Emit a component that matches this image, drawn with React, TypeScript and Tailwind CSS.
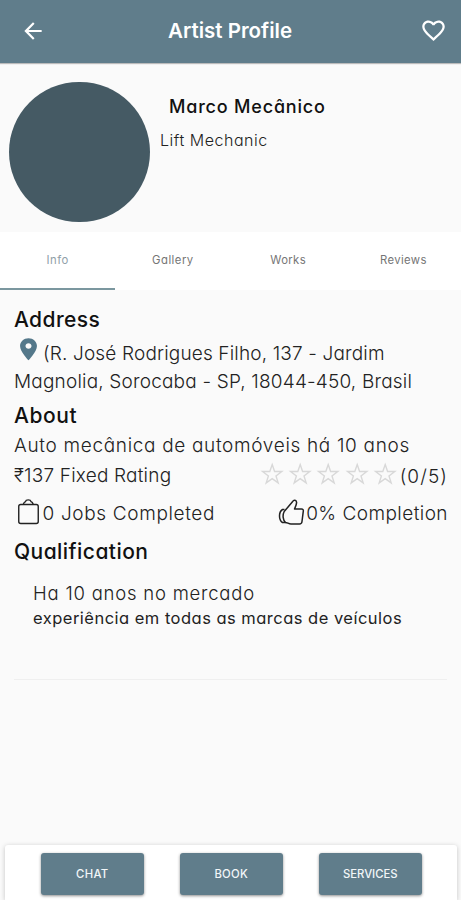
function Star() {
  return (
    <svg className="-mt-[5px] h-7 w-[28.4px]" viewBox="0 0 28 28" fill="none" stroke="#d8d8d8" strokeWidth="1.4">
      <path d="M14 4.600l2.400 6.900h7.200l-5.800 4.400 2.200 7L14 18.700l-6 4.200 2.200-7-5.800-4.400h7.200z" />
    </svg>
  );
}

const tabs = [
  { name: 'Info', style: 'text-[#90a0a8] tracking-[0.42px]' },
  { name: 'Gallery', style: 'text-[#757575] tracking-[0.5px]' },
  { name: 'Works', style: 'text-[#757575] tracking-[0.38px]' },
  { name: 'Reviews', style: 'text-[#757575] tracking-[0.38px]' },
];

const actions = [
  { name: 'CHAT', style: 'tracking-[0.3px]' },
  { name: 'BOOK', style: 'tracking-[0.3px]' },
  { name: 'SERVICES', style: 'tracking-[-0.05px]' },
];

export default function App() {
  return (
    <div className="flex h-[900px] w-[461px] flex-col overflow-hidden bg-[#fafafa] font-['Inter','Noto_Sans',sans-serif] whitespace-nowrap text-[#111] [font-feature-settings:'cv11']">
      <header className="flex h-[63px] shrink-0 items-center justify-between bg-[#607d8b] pr-[14px] pl-[20px] text-white shadow-[0_1px_1px_rgba(0,0,0,0.25)]">
        <svg className="-mt-px h-[26px] w-[26px]" viewBox="0 0 24 24" fill="currentColor">
          <path d="M20 11H7.83l5.59-5.59L12 4l-8 8 8 8 1.41-1.41L7.83 13H20v-2z" />
        </svg>
        <h1 className="mr-[6px] text-[20.5px] font-semibold">Artist Profile</h1>
        <svg className="-mt-[2px] h-[27px] w-[27px]" viewBox="0 0 24 24" fill="currentColor">
          <path d="M16.5 3c-1.74 0-3.41.81-4.5 2.09C10.91 3.81 9.24 3 7.5 3 4.42 3 2 5.42 2 8.5c0 3.78 3.4 6.86 8.55 11.54L12 21.35l1.45-1.32C18.6 15.36 22 12.28 22 8.5 22 5.42 19.58 3 16.5 3zm-4.4 15.55l-.1.1-.1-.1C7.14 14.24 4 11.39 4 8.5 4 6.5 5.5 5 7.5 5c1.54 0 3.04.99 3.57 2.36h1.87C13.46 5.99 14.96 5 16.5 5c2 0 3.5 1.5 3.5 3.5 0 2.89-3.14 5.74-7.9 10.05z" />
        </svg>
      </header>

      <section className="flex h-[169px] shrink-0 items-start pt-[19px] pl-[9.4px]">
        <div className="h-[140px] w-[141px] rounded-full bg-[#455a64]" />
        <div className="pt-[9px] pl-[9.600px]">
          <h2 className="pl-[9px] text-[18px] leading-[31px] font-medium tracking-[0.81px]">Marco Mecânico</h2>
          <p className="pt-px text-[16px] leading-[35px] font-light tracking-[0.52px] text-[#222]">Lift Mechanic</p>
        </div>
      </section>

      <nav className="grid h-[58px] shrink-0 grid-cols-4 bg-white">
        {tabs.map((t, i) => (
          <div key={t.name} className={i === 0 ? 'border-b-2 border-[#7b979f]' : 'border-b-2 border-transparent'}>
            <div className={`text-center text-[11.3px] leading-[56px] ${t.style}`}>{t.name}</div>
          </div>
        ))}
      </nav>

      <main className="flex-1 pt-[14px] pr-[14px] pl-[14px] text-[19px] font-light text-[#222]">
        <h3 className="h-8 text-[21px] leading-8 font-medium tracking-[0.4px] text-[#111]">Address</h3>
        <div className="flex h-8 items-center">
          <svg className="-mt-[5px] h-[26.5px] w-[29px]" viewBox="0 0 24 24" preserveAspectRatio="none" fill="#54788a">
            <path d="M12 2C8.13 2 5 5.13 5 9c0 5.25 7 13 7 13s7-7.75 7-13c0-3.87-3.13-7-7-7zm0 9.5c-1.38 0-2.5-1.12-2.5-2.5s1.12-2.5 2.5-2.5 2.5 1.12 2.5 2.5-1.12 2.5-2.5 2.5z" />
          </svg>
          <span className="mt-[4px] leading-8 tracking-[0.16px]">(R. José Rodrigues Filho, 137 - Jardim</span>
        </div>
        <p className="h-[27px] leading-[27px] tracking-[0.19px]">Magnolia, Sorocaba - SP, 18044-450, Brasil</p>
        <h3 className="mt-[6px] h-[30px] text-[21px] leading-[30px] font-medium tracking-[0.6px] text-[#111]">About</h3>
        <p className="h-[30px] leading-[30px] tracking-[0.67px]">Auto mecânica de automóveis há 10 anos</p>
        <div className="flex h-[30px] items-center justify-between leading-[30px]">
          <span className="tracking-[0.2px]">₹137 Fixed Rating</span>
          <span className="-mr-px flex items-center">
            <span className="-ml-px flex"><Star /><Star /><Star /><Star /><Star /></span>
            <span className="pt-px tracking-[1.1px]">(0/5)</span>
          </span>
        </div>
        <div className="mt-[8px] flex h-[30px] items-center justify-between leading-[30px]">
          <span className="flex items-center">
            <svg className="-mt-[5px] h-[28px] w-[28.5px]" viewBox="0 0 28 28" fill="none" stroke="#222" strokeWidth="1.4">
              <rect x="4.5" y="6.5" width="19.5" height="19" rx="2" />
              <path d="M9 6.5C9.600 4.500 10.500 4 11.200 3.700C11.700 1.300 16.300 1.300 16.800 3.700C17.800 4 18.500 4.700 19 6.500" />
            </svg>
            <span className="tracking-[0.65px]">0 Jobs Completed</span>
          </span>
          <span className="-mr-px flex items-center">
            <svg className="-mt-[5px] h-[28px] w-[28px]" viewBox="0 0 28 28" fill="none" stroke="#222" strokeWidth="1.5" strokeLinejoin="round">
              <path d="M6.200 13.500L14.500 3.800C15.700 1.300 18.700 1.800 18.600 4.600C18.500 6.700 17.400 9 16.500 11H23.500C25 11 25.500 12 25.300 13.200L24 23.500C23.800 25.300 23 26 21.500 26H13C10.500 26 9.500 24.500 7.500 24.500C4.800 22 4.400 17 6.200 13.500Z" />
              <path d="M6.500 11.500H4.500C0.500 14 0.500 22 4.500 24.500H7.500" />
            </svg>
            <span className="tracking-[0.45px]">0% Completion</span>
          </span>
        </div>
        <h3 className="mt-2 h-[30px] text-[21px] leading-[30px] font-medium tracking-[0.45px] text-[#111]">Qualification</h3>
        <div className="h-[113px] border-b border-[#efefef] pt-[11px] pl-[19px]">
          <p className="h-[29px] text-[18.5px] leading-[30px] tracking-[0.78px]">Ha 10 anos no mercado</p>
          <p className="h-[22px] text-[16.5px] leading-[22px] font-normal tracking-[0.48px]">experiência em todas as marcas de veículos</p>
        </div>
      </main>

      <footer className="mx-[4.5px] flex h-[55px] shrink-0 justify-between rounded-t-[3px] bg-white pt-[7.5px] pr-[34.5px] pl-[36px] shadow-[0_1px_5px_rgba(0,0,0,0.22)]">
        {actions.map((a) => (
          <button
            key={a.name}
            className={`h-[42px] w-[103.5px] rounded-[3px] bg-[#607d8b] pt-px text-[11.3px] font-medium text-[#f2f6f8] shadow-[0_1px_3px_rgba(0,0,0,0.45)] ${a.style}`}
          >
            {a.name}
          </button>
        ))}
      </footer>
    </div>
  );
}
